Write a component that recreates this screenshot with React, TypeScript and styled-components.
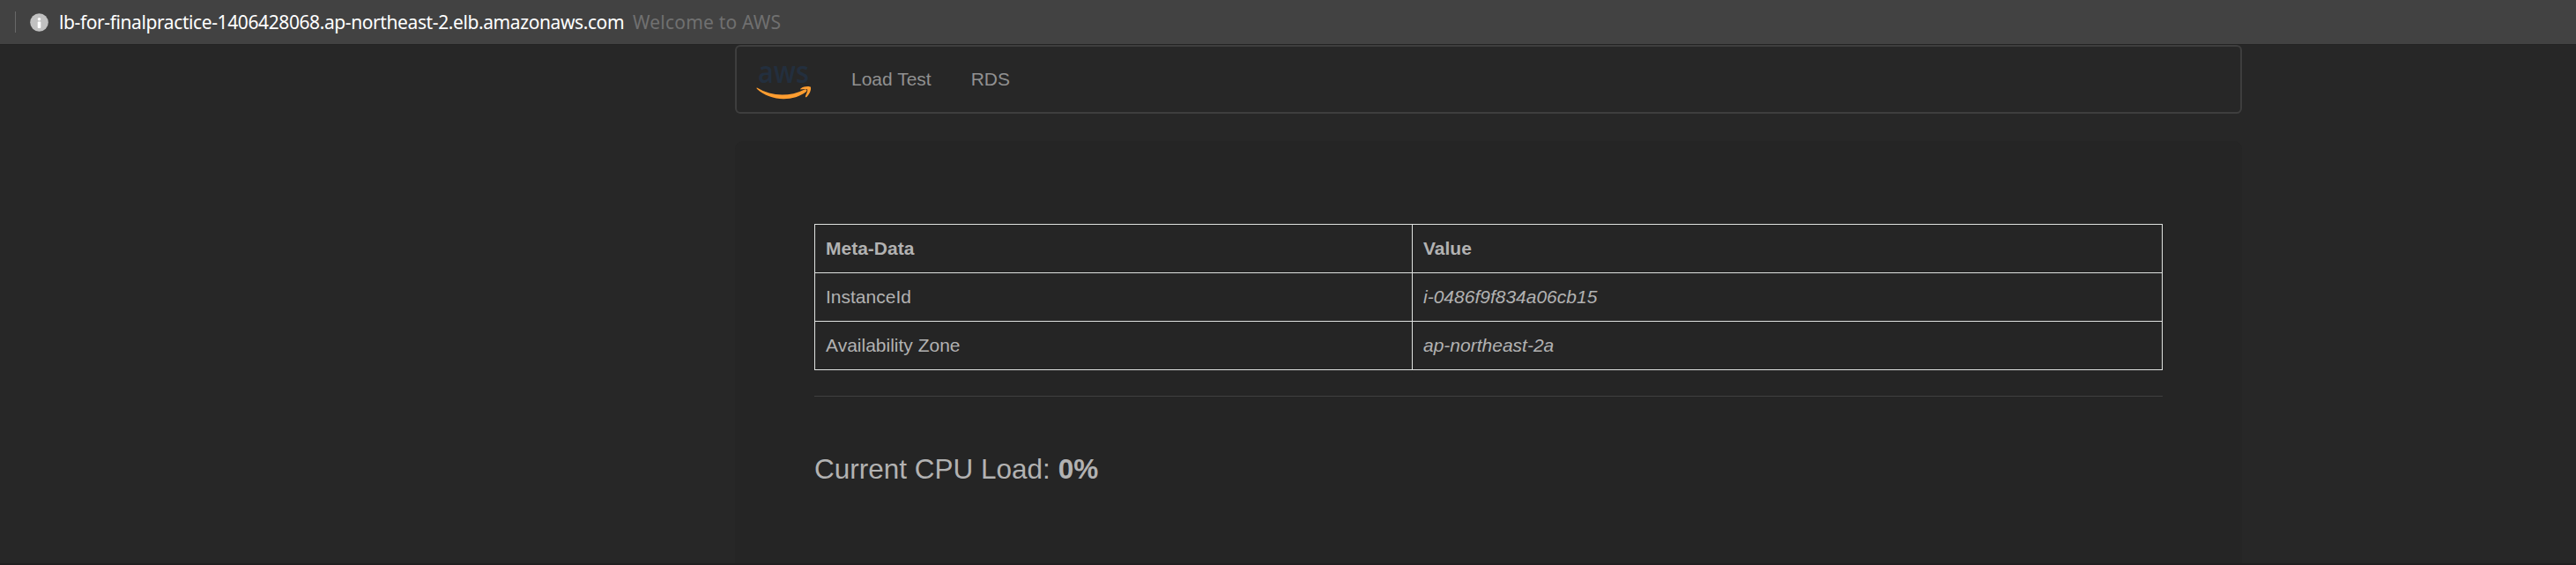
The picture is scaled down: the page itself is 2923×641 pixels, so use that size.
import React from "react";
import styled, { createGlobalStyle } from "styled-components";

const Global = createGlobalStyle`
  * { box-sizing: border-box; }
  html, body { margin: 0; background: #272727; }
  body { font-family: "Liberation Sans", Arial, sans-serif; font-size: 21px; line-height: 30px; color: #b2b2b2; overflow: hidden; }
`;
const Page = styled.div`
  height: 641px;
  display: flex;
  flex-direction: column;
  overflow: hidden;
  border-bottom: 2px solid #201f20;
`;
const AddressBar = styled.header`
  flex: none;
  height: 51px;
  display: flex;
  align-items: center;
  background: #424242;
  border-bottom: 1px solid #232323;
  font-family: "Noto Sans", sans-serif;
  white-space: pre;
`;
const Divider = styled.span`
  width: 1px;
  height: 24px;
  margin: 0 16px 0 17px;
  background: #686868;
`;
const InfoIcon = styled.svg`
  width: 21px;
  height: 21px;
  margin-right: 12px;
`;
const Host = styled.span`
  color: #fff;
  width: 651px;
  letter-spacing: -0.4px;
`;
const PageTitle = styled.span`
  color: #707070;
  letter-spacing: 0.2px;
`;
const Container = styled.div`
  width: 1710px;
  margin-left: 834px;
  flex: 1;
  display: flex;
  flex-direction: column;
`;
const Nav = styled.nav`
  height: 78px;
  flex: none;
  display: flex;
  align-items: center;
  padding-left: 22px;
  border: 2px solid #3e3e3e;
  border-radius: 6px;
`;
const Logo = styled.svg`
  width: 64px;
  height: 48px;
  margin-right: 44px;
  overflow: visible;
`;
const NavLink = styled.a`
  color: #919191;
  margin-right: 45px;
`;
const Panel = styled.main`
  margin-top: 31px;
  flex: 1;
  padding: 94px 90px 0;
  background: #252525;
  border-radius: 9px 9px 0 0;
`;
const Table = styled.table`
  width: 1530px;
  table-layout: fixed;
  border-collapse: collapse;
`;
const Cell = styled.td`
  height: 55px;
  padding: 0 12px;
  border: 1px solid #dfe2e0;
  text-align: left;
  &:first-child { width: 678px; }
`;
const Rule = styled.hr`
  margin: 29px 0 0;
  border: 0;
  height: 1px;
  background: #404040;
`;
const Load = styled.p`
  margin: 60px 0 0;
  font-size: 31.5px;
  line-height: 45px;
`;

const rows = [
  ["InstanceId", "i-0486f9f834a06cb15"],
  ["Availability Zone", "ap-northeast-2a"],
];

export default function App() {
  return (
    <Page>
      <Global />
      <AddressBar>
        <Divider />
        <InfoIcon viewBox="0 0 21 21">
          <circle cx="10.5" cy="10.5" r="10.3" fill="#c1c1c1" />
          <circle cx="10.5" cy="6.7" r="1.8" fill="#fff" />
          <rect x="8.7" y="9.5" width="3.6" height="7.5" rx="1" fill="#fff" />
        </InfoIcon>
        <Host>lb-for-finalpractice-1406428068.ap-northeast-2.elb.amazonaws.com</Host>
        <PageTitle>Welcome to AWS</PageTitle>
      </AddressBar>
      <Container>
        <Nav>
          <Logo viewBox="0 0 64 48">
            <text x="2" y="28" textLength="58" lengthAdjust="spacingAndGlyphs" fontFamily="Open Sans, sans-serif" fontWeight="600" fontSize="35" fill="#232f3e">aws</text>
            <path d="M1 33.6 C17 43.3 37 44.5 55 35.4 C57 34.7 58.4 36.5 56.8 38 C42 49.7 16 49.2 .8 34.8 C.4 34 .5 33.4 1 33.6 Z" fill="#ff9d30" />
            <path d="M50.5 34.4 C54 31.6 60 31.4 61.8 32.6 C62.9 35.5 60.5 41.5 57 44.2 C56.3 44.6 55.6 44 56 43.1 C57 40.5 59 36.6 58 35.6 C57 34.6 53 35.2 51 35.4 C50.1 35.5 49.9 34.9 50.5 34.4 Z" fill="#ff9d30" />
          </Logo>
          <NavLink>Load Test</NavLink>
          <NavLink>RDS</NavLink>
        </Nav>
        <Panel>
          <Table>
            <thead>
              <tr><Cell as="th">Meta-Data</Cell><Cell as="th">Value</Cell></tr>
            </thead>
            <tbody>
              {rows.map(([name, value]) => (
                <tr key={name}><Cell>{name}</Cell><Cell><i>{value}</i></Cell></tr>
              ))}
            </tbody>
          </Table>
          <Rule />
          <Load>Current CPU Load: <b>0%</b></Load>
        </Panel>
      </Container>
    </Page>
  );
}
